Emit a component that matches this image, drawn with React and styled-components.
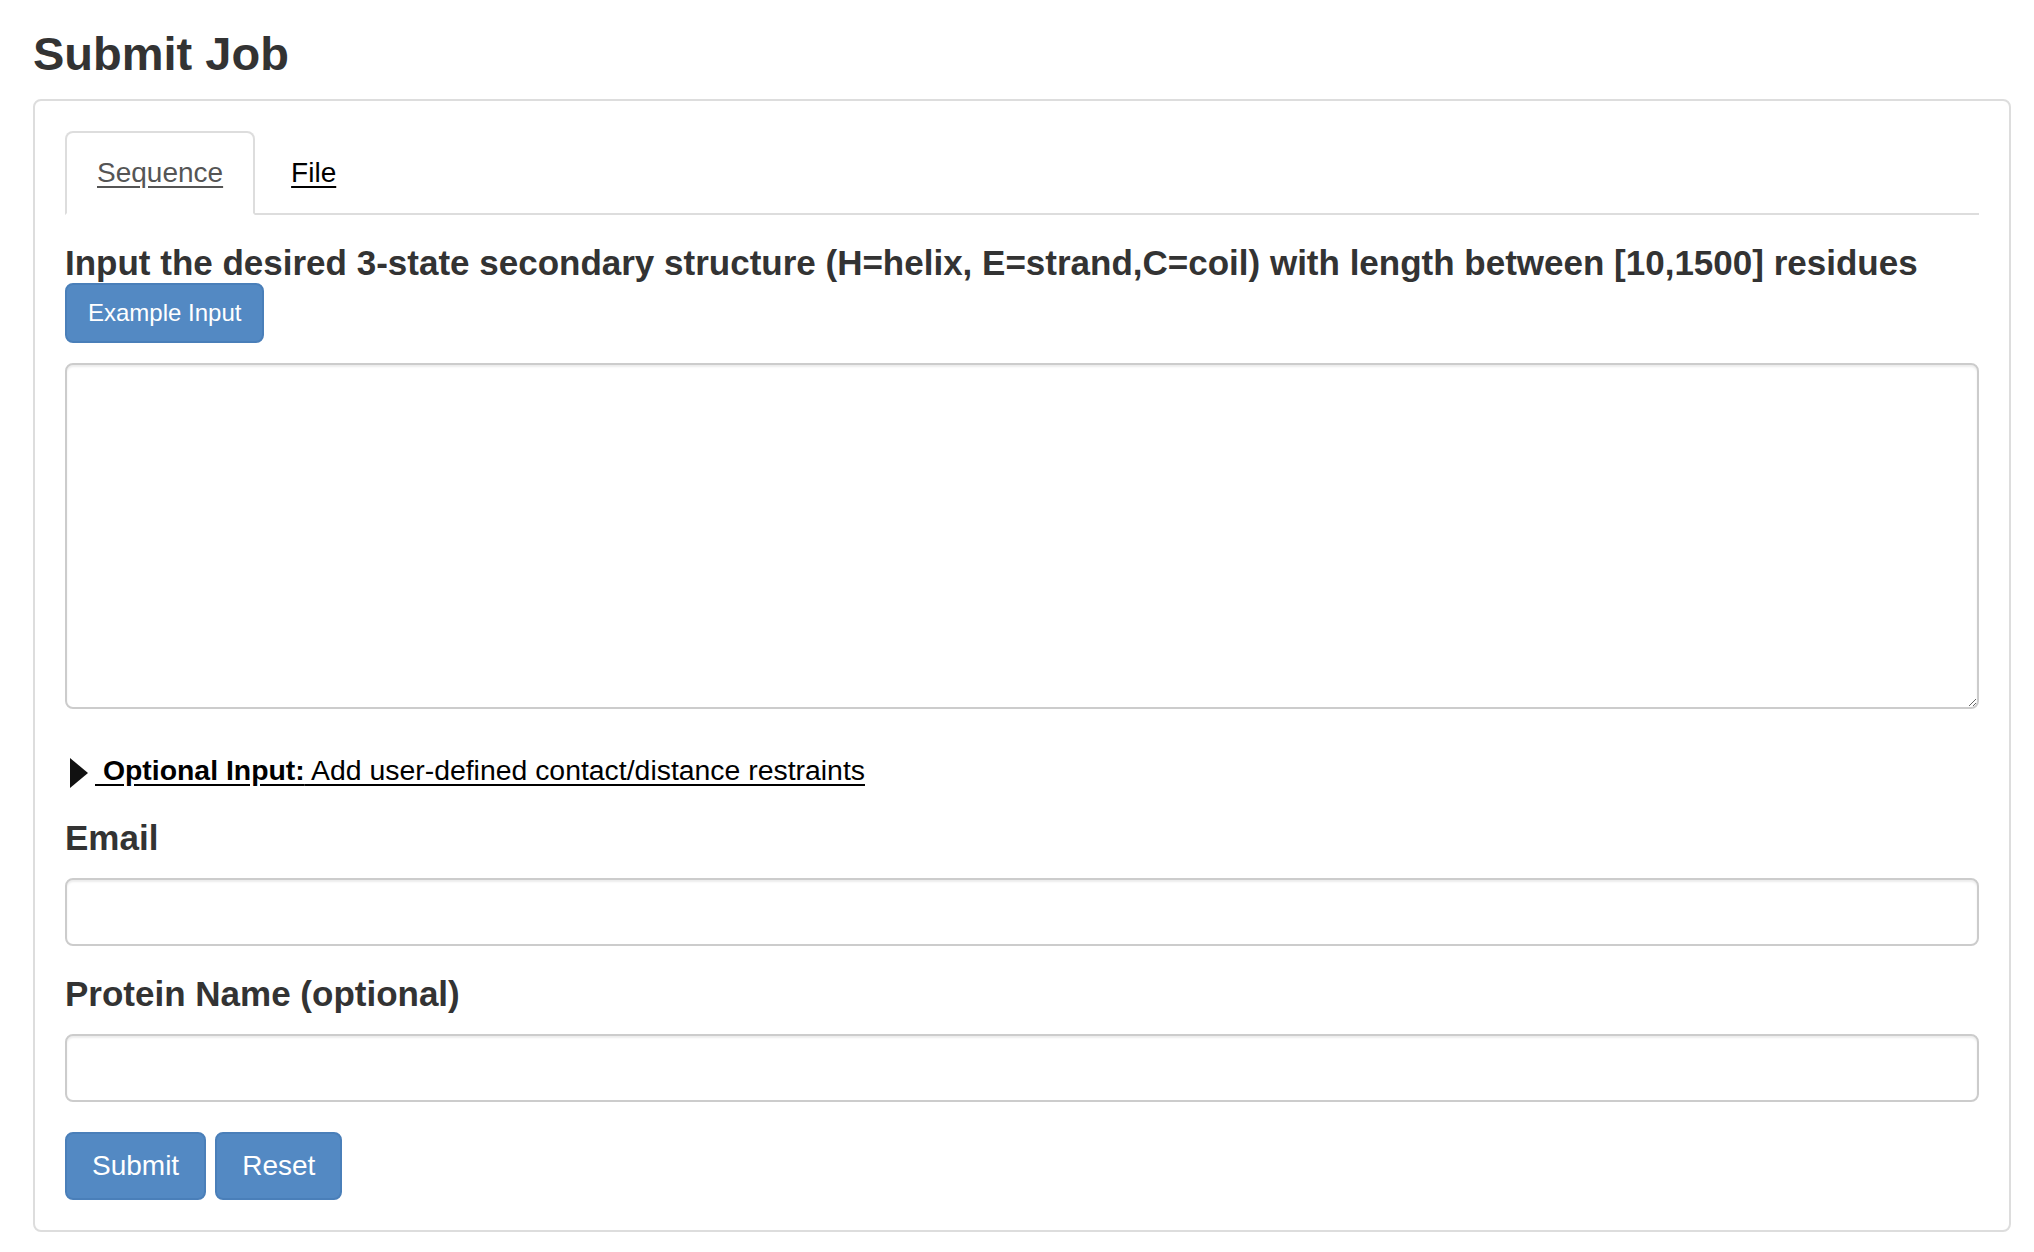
import React, { useState } from 'react';
import styled, { createGlobalStyle } from 'styled-components';

const GlobalStyle = createGlobalStyle`
  * { box-sizing: border-box; }
  html, body {
    margin: 0;
    padding: 0;
    background: #fff;
  }
  body {
    font-family: "Liberation Sans", Arial, Helvetica, sans-serif;
    color: #333;
  }
`;

const Page = styled.div`
  padding: 27px 23px 19px 33px;
`;

const Title = styled.h3`
  margin: 0 0 19px;
  font-size: 47px;
  line-height: 53px;
  font-weight: 700;
  color: #333;
`;

const Panel = styled.div`
  border: 2px solid #ddd;
  border-radius: 8px;
  padding: 30px;
`;

const TabList = styled.ul`
  display: flex;
  list-style: none;
  margin: 0;
  padding: 0;
  border-bottom: 2px solid #ddd;
`;

const TabItem = styled.li`
  margin: 0 4px -2px 0;
`;

const TabLink = styled.a`
  display: block;
  padding: 20px 30px;
  font-size: 28px;
  line-height: 40px;
  border: 2px solid transparent;
  border-radius: 8px 8px 0 0;
  text-decoration: underline;
  text-underline-offset: 4px;
  cursor: pointer;
  color: ${p => (p.$active ? '#555' : '#000')};
  background: ${p => (p.$active ? '#fff' : 'transparent')};
  border-color: ${p => (p.$active ? '#ddd #ddd transparent' : 'transparent')};
`;

const FieldLabel = styled.h4`
  margin: ${p => p.$top || 0}px 0 0;
  font-size: 35px;
  line-height: 40px;
  font-weight: 700;
  color: #333;
`;

const Button = styled.button`
  display: inline-block;
  font-family: inherit;
  font-size: ${p => (p.$small ? 24 : 28)}px;
  line-height: ${p => (p.$small ? 36 : 40)}px;
  padding: ${p => (p.$small ? '10px 21px' : '12px 25px')};
  color: #fff;
  background: #5389c3;
  border: 2px solid #4a7fb9;
  border-radius: 8px;
  cursor: pointer;
`;

const TextArea = styled.textarea`
  display: block;
  width: 100%;
  height: 346px;
  margin-top: 20px;
  padding: 12px 24px;
  font-family: inherit;
  font-size: 28px;
  color: #555;
  border: 2px solid #ccc;
  border-radius: 8px;
  box-shadow: inset 0 2px 2px rgba(0, 0, 0, 0.075);
  outline: none;
`;

const TextInput = styled.input`
  display: block;
  width: 100%;
  height: 68px;
  margin-top: 20px;
  padding: 12px 24px;
  font-family: inherit;
  font-size: 28px;
  color: #555;
  border: 2px solid #ccc;
  border-radius: 8px;
  box-shadow: inset 0 2px 2px rgba(0, 0, 0, 0.075);
  outline: none;
`;

const Details = styled.details`
  margin-top: 41px;
`;

const Summary = styled.summary`
  display: flex;
  align-items: center;
  list-style: none;
  cursor: pointer;
  font-size: 28.4px;
  line-height: 40px;
  color: #000;
  &::-webkit-details-marker { display: none; }
`;

const Arrow = styled.span`
  display: inline-block;
  width: 0;
  height: 0;
  margin: 6px 7px 0 5px;
  border-top: 15px solid transparent;
  border-bottom: 15px solid transparent;
  border-left: 18px solid #111;
  transform: ${p => (p.$open ? 'rotate(90deg)' : 'none')};
`;

const SummaryText = styled.span`
  text-decoration: underline;
  text-underline-offset: 4px;
  white-space: pre;
`;

const ButtonRow = styled.div`
  display: flex;
  gap: 9px;
  margin-top: 30px;
`;

const App = () => {
  const [tab, setTab] = useState('sequence');
  const [open, setOpen] = useState(false);

  return (
    <Page>
      <GlobalStyle />
      <Title>Submit Job</Title>
      <Panel>
        <TabList>
          <TabItem>
            <TabLink $active={tab === 'sequence'} onClick={() => setTab('sequence')}>
              Sequence
            </TabLink>
          </TabItem>
          <TabItem>
            <TabLink $active={tab === 'file'} onClick={() => setTab('file')}>
              File
            </TabLink>
          </TabItem>
        </TabList>

        <FieldLabel $top={28}>
          Input the desired 3-state secondary structure (H=helix, E=strand,C=coil) with length between [10,1500] residues
        </FieldLabel>
        <Button type="button" $small>Example Input</Button>
        <TextArea />

        <Details open={open} onToggle={e => setOpen(e.currentTarget.open)}>
          <Summary>
            <Arrow $open={open} />
            <SummaryText>
              <b> Optional Input:</b> Add user-defined contact/distance restraints
            </SummaryText>
          </Summary>
        </Details>

        <FieldLabel $top={28}>Email</FieldLabel>
        <TextInput type="email" />

        <FieldLabel $top={28}>Protein Name (optional)</FieldLabel>
        <TextInput type="text" />

        <ButtonRow>
          <Button type="submit">Submit</Button>
          <Button type="reset">Reset</Button>
        </ButtonRow>
      </Panel>
    </Page>
  );
};

export default App;
